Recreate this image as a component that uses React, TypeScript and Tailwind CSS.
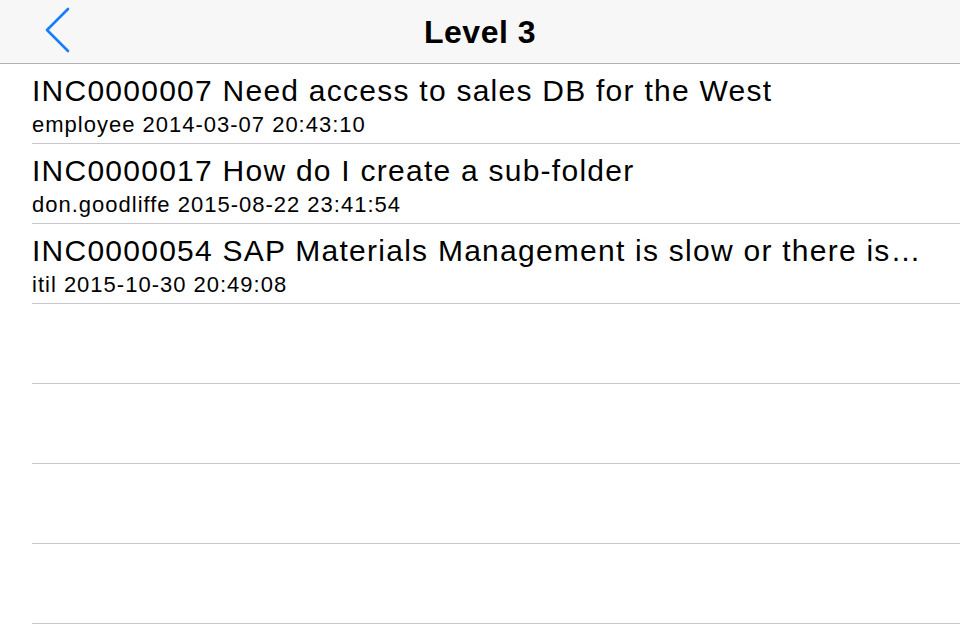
import React from "react";

const rows = [
  { t: "INC0000007 Need access to sales DB for the West", s: "employee 2014-03-07 20:43:10" },
  { t: "INC0000017 How do I create a sub-folder", s: "don.goodliffe 2015-08-22 23:41:54" },
  { t: "INC0000054 SAP Materials Management is slow or there is…", s: "itil 2015-10-30 20:49:08" },
  { t: "", s: "" },
  { t: "", s: "" },
  { t: "", s: "" },
  { t: "", s: "" },
];

export default function App() {
  return (
    <div className="w-[960px] h-[640px] bg-white overflow-hidden" style={{ fontFamily: "'Liberation Sans', Arial, sans-serif" }}>
      <div className="relative h-[64px] bg-[#f7f7f7] border-b border-[#b2b2b2] flex items-center justify-center">
        <svg className="absolute left-[43px] top-[6px]" width="30" height="48" viewBox="0 0 30 48">
          <path d="M25 3 L4 24 L25 45" fill="none" stroke="#157efb" strokeWidth="2.6" strokeLinecap="round" strokeLinejoin="round" />
        </svg>
        <div className="text-[32px] font-bold text-black tracking-[0.5px]">Level 3</div>
      </div>
      <div>
        {rows.map((r, i) => (
          <div key={i} className="pl-[32px]">
            <div className="h-[80px] border-b border-[#c8c7cc] pt-[9px]">
              {r.t && (
                <>
                  <div className="text-[30px] leading-[36px] text-black whitespace-nowrap tracking-[1.25px]">{r.t}</div>
                  <div className="mt-[3px] text-[22px] leading-[26px] text-black whitespace-nowrap tracking-[1px]">{r.s}</div>
                </>
              )}
            </div>
          </div>
        ))}
      </div>
    </div>
  );
}
